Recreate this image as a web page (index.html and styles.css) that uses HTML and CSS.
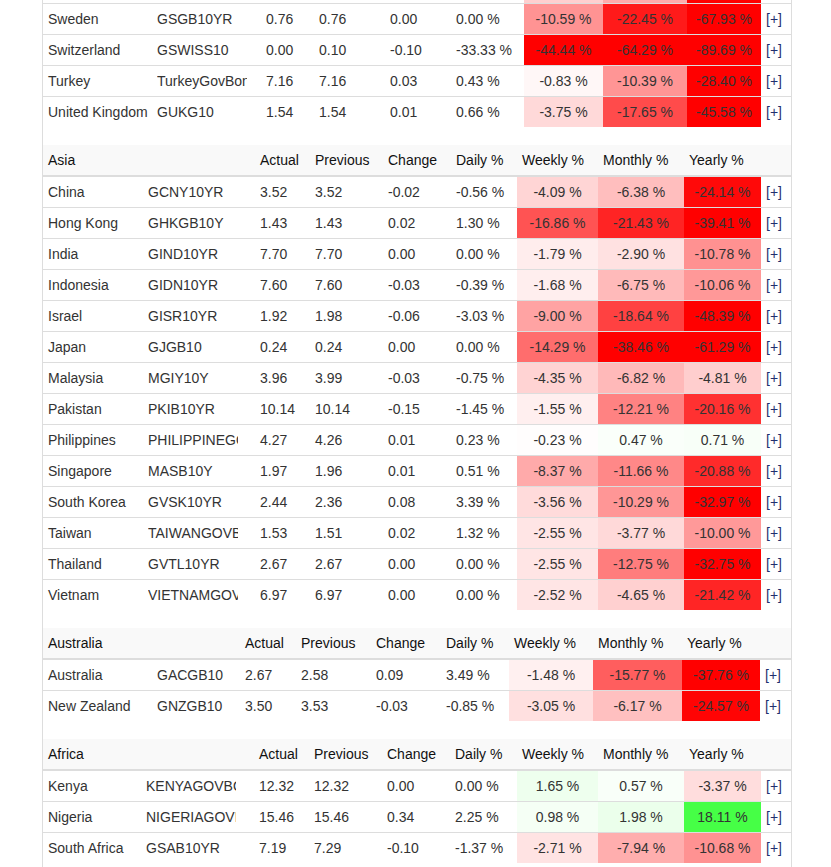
FILE: index.html
```html
<!DOCTYPE html>
<html lang="en">
<head>
<meta charset="utf-8">
<title>Government Bond Yields</title>
<link rel="stylesheet" href="styles.css">
</head>
<body>
<div class="panel">

<table class="t eu">
<colgroup><col class="c1"><col class="c2"><col class="c3"><col class="c4"><col class="c5"><col class="c6"><col class="c7"><col class="c8"><col class="c9"><col class="c10"></colgroup>
<tbody>
<tr><td>Spain</td><td><div class="sym">GSPG10YR</div></td><td>1.77</td><td>1.76</td><td>0.01</td><td>0.57 %</td><td class="h" style="background:rgb(255,207,207)">-4.60 %</td><td class="h" style="background:rgb(255,172,172)">-8.10 %</td><td class="h" style="background:rgb(255,0,0)">-40.21 %</td><td><a href="#">[+]</a></td></tr>
<tr><td>Sweden</td><td><div class="sym">GSGB10YR</div></td><td>0.76</td><td>0.76</td><td>0.00</td><td>0.00 %</td><td class="h" style="background:rgb(255,147,147)">-10.59 %</td><td class="h" style="background:rgb(255,26,26)">-22.45 %</td><td class="h" style="background:rgb(255,0,0)">-67.93 %</td><td><a href="#">[+]</a></td></tr>
<tr><td>Switzerland</td><td><div class="sym">GSWISS10</div></td><td>0.00</td><td>0.10</td><td>-0.10</td><td>-33.33 %</td><td class="h" style="background:rgb(255,0,0)">-44.44 %</td><td class="h" style="background:rgb(255,0,0)">-64.29 %</td><td class="h" style="background:rgb(255,0,0)">-89.69 %</td><td><a href="#">[+]</a></td></tr>
<tr><td>Turkey</td><td><div class="sym">TurkeyGovBond10Y</div></td><td>7.16</td><td>7.16</td><td>0.03</td><td>0.43 %</td><td class="h" style="background:rgb(255,247,247)">-0.83 %</td><td class="h" style="background:rgb(255,149,149)">-10.39 %</td><td class="h" style="background:rgb(255,0,0)">-28.40 %</td><td><a href="#">[+]</a></td></tr>
<tr><td>United Kingdom</td><td><div class="sym">GUKG10</div></td><td>1.54</td><td>1.54</td><td>0.01</td><td>0.66 %</td><td class="h" style="background:rgb(255,217,217)">-3.75 %</td><td class="h" style="background:rgb(255,75,75)">-17.65 %</td><td class="h" style="background:rgb(255,0,0)">-45.58 %</td><td><a href="#">[+]</a></td></tr>
</tbody>
</table>

<table class="t as">
<colgroup><col class="c1"><col class="c2"><col class="c3"><col class="c4"><col class="c5"><col class="c6"><col class="c7"><col class="c8"><col class="c9"><col class="c10"></colgroup>
<thead>
<tr><th>Asia</th><th></th><th>Actual</th><th>Previous</th><th>Change</th><th>Daily %</th><th>Weekly %</th><th>Monthly %</th><th>Yearly %</th><th></th></tr>
</thead>
<tbody>
<tr><td>China</td><td><div class="sym">GCNY10YR</div></td><td>3.52</td><td>3.52</td><td>-0.02</td><td>-0.56 %</td><td class="h" style="background:rgb(255,213,213)">-4.09 %</td><td class="h" style="background:rgb(255,190,190)">-6.38 %</td><td class="h" style="background:rgb(255,9,9)">-24.14 %</td><td><a href="#">[+]</a></td></tr>
<tr><td>Hong Kong</td><td><div class="sym">GHKGB10Y</div></td><td>1.43</td><td>1.43</td><td>0.02</td><td>1.30 %</td><td class="h" style="background:rgb(255,83,83)">-16.86 %</td><td class="h" style="background:rgb(255,36,36)">-21.43 %</td><td class="h" style="background:rgb(255,0,0)">-39.41 %</td><td><a href="#">[+]</a></td></tr>
<tr><td>India</td><td><div class="sym">GIND10YR</div></td><td>7.70</td><td>7.70</td><td>0.00</td><td>0.00 %</td><td class="h" style="background:rgb(255,237,237)">-1.79 %</td><td class="h" style="background:rgb(255,225,225)">-2.90 %</td><td class="h" style="background:rgb(255,145,145)">-10.78 %</td><td><a href="#">[+]</a></td></tr>
<tr><td>Indonesia</td><td><div class="sym">GIDN10YR</div></td><td>7.60</td><td>7.60</td><td>-0.03</td><td>-0.39 %</td><td class="h" style="background:rgb(255,238,238)">-1.68 %</td><td class="h" style="background:rgb(255,186,186)">-6.75 %</td><td class="h" style="background:rgb(255,152,152)">-10.06 %</td><td><a href="#">[+]</a></td></tr>
<tr><td>Israel</td><td><div class="sym">GISR10YR</div></td><td>1.92</td><td>1.98</td><td>-0.06</td><td>-3.03 %</td><td class="h" style="background:rgb(255,163,163)">-9.00 %</td><td class="h" style="background:rgb(255,65,65)">-18.64 %</td><td class="h" style="background:rgb(255,0,0)">-48.39 %</td><td><a href="#">[+]</a></td></tr>
<tr><td>Japan</td><td><div class="sym">GJGB10</div></td><td>0.24</td><td>0.24</td><td>0.00</td><td>0.00 %</td><td class="h" style="background:rgb(255,109,109)">-14.29 %</td><td class="h" style="background:rgb(255,0,0)">-38.46 %</td><td class="h" style="background:rgb(255,0,0)">-61.29 %</td><td><a href="#">[+]</a></td></tr>
<tr><td>Malaysia</td><td><div class="sym">MGIY10Y</div></td><td>3.96</td><td>3.99</td><td>-0.03</td><td>-0.75 %</td><td class="h" style="background:rgb(255,211,211)">-4.35 %</td><td class="h" style="background:rgb(255,185,185)">-6.82 %</td><td class="h" style="background:rgb(255,206,206)">-4.81 %</td><td><a href="#">[+]</a></td></tr>
<tr><td>Pakistan</td><td><div class="sym">PKIB10YR</div></td><td>10.14</td><td>10.14</td><td>-0.15</td><td>-1.45 %</td><td class="h" style="background:rgb(255,239,239)">-1.55 %</td><td class="h" style="background:rgb(255,130,130)">-12.21 %</td><td class="h" style="background:rgb(255,49,49)">-20.16 %</td><td><a href="#">[+]</a></td></tr>
<tr><td>Philippines</td><td><div class="sym">PHILIPPINEGOV10Y</div></td><td>4.27</td><td>4.26</td><td>0.01</td><td>0.23 %</td><td class="h" style="background:rgb(255,253,253)">-0.23 %</td><td class="h" style="background:rgb(250,255,250)">0.47 %</td><td class="h" style="background:rgb(248,255,248)">0.71 %</td><td><a href="#">[+]</a></td></tr>
<tr><td>Singapore</td><td><div class="sym">MASB10Y</div></td><td>1.97</td><td>1.96</td><td>0.01</td><td>0.51 %</td><td class="h" style="background:rgb(255,170,170)">-8.37 %</td><td class="h" style="background:rgb(255,136,136)">-11.66 %</td><td class="h" style="background:rgb(255,42,42)">-20.88 %</td><td><a href="#">[+]</a></td></tr>
<tr><td>South Korea</td><td><div class="sym">GVSK10YR</div></td><td>2.44</td><td>2.36</td><td>0.08</td><td>3.39 %</td><td class="h" style="background:rgb(255,219,219)">-3.56 %</td><td class="h" style="background:rgb(255,150,150)">-10.29 %</td><td class="h" style="background:rgb(255,0,0)">-32.97 %</td><td><a href="#">[+]</a></td></tr>
<tr><td>Taiwan</td><td><div class="sym">TAIWANGOVBOND10Y</div></td><td>1.53</td><td>1.51</td><td>0.02</td><td>1.32 %</td><td class="h" style="background:rgb(255,229,229)">-2.55 %</td><td class="h" style="background:rgb(255,217,217)">-3.77 %</td><td class="h" style="background:rgb(255,153,153)">-10.00 %</td><td><a href="#">[+]</a></td></tr>
<tr><td>Thailand</td><td><div class="sym">GVTL10YR</div></td><td>2.67</td><td>2.67</td><td>0.00</td><td>0.00 %</td><td class="h" style="background:rgb(255,229,229)">-2.55 %</td><td class="h" style="background:rgb(255,125,125)">-12.75 %</td><td class="h" style="background:rgb(255,0,0)">-32.75 %</td><td><a href="#">[+]</a></td></tr>
<tr><td>Vietnam</td><td><div class="sym">VIETNAMGOVBOND10Y</div></td><td>6.97</td><td>6.97</td><td>0.00</td><td>0.00 %</td><td class="h" style="background:rgb(255,229,229)">-2.52 %</td><td class="h" style="background:rgb(255,208,208)">-4.65 %</td><td class="h" style="background:rgb(255,37,37)">-21.42 %</td><td><a href="#">[+]</a></td></tr>
</tbody>
</table>

<table class="t au">
<colgroup><col class="c1"><col class="c2"><col class="c3"><col class="c4"><col class="c5"><col class="c6"><col class="c7"><col class="c8"><col class="c9"><col class="c10"></colgroup>
<thead>
<tr><th>Australia</th><th></th><th>Actual</th><th>Previous</th><th>Change</th><th>Daily %</th><th>Weekly %</th><th>Monthly %</th><th>Yearly %</th><th></th></tr>
</thead>
<tbody>
<tr><td>Australia</td><td><div class="sym">GACGB10</div></td><td>2.67</td><td>2.58</td><td>0.09</td><td>3.49 %</td><td class="h" style="background:rgb(255,240,240)">-1.48 %</td><td class="h" style="background:rgb(255,94,94)">-15.77 %</td><td class="h" style="background:rgb(255,0,0)">-37.76 %</td><td><a href="#">[+]</a></td></tr>
<tr><td>New Zealand</td><td><div class="sym">GNZGB10</div></td><td>3.50</td><td>3.53</td><td>-0.03</td><td>-0.85 %</td><td class="h" style="background:rgb(255,224,224)">-3.05 %</td><td class="h" style="background:rgb(255,192,192)">-6.17 %</td><td class="h" style="background:rgb(255,4,4)">-24.57 %</td><td><a href="#">[+]</a></td></tr>
</tbody>
</table>

<table class="t af">
<colgroup><col class="c1"><col class="c2"><col class="c3"><col class="c4"><col class="c5"><col class="c6"><col class="c7"><col class="c8"><col class="c9"><col class="c10"></colgroup>
<thead>
<tr><th>Africa</th><th></th><th>Actual</th><th>Previous</th><th>Change</th><th>Daily %</th><th>Weekly %</th><th>Monthly %</th><th>Yearly %</th><th></th></tr>
</thead>
<tbody>
<tr><td>Kenya</td><td><div class="sym">KENYAGOVBOND10Y</div></td><td>12.32</td><td>12.32</td><td>0.00</td><td>0.00 %</td><td class="h" style="background:rgb(238,255,238)">1.65 %</td><td class="h" style="background:rgb(249,255,249)">0.57 %</td><td class="h" style="background:rgb(255,221,221)">-3.37 %</td><td><a href="#">[+]</a></td></tr>
<tr><td>Nigeria</td><td><div class="sym">NIGERIAGOVBOND10Y</div></td><td>15.46</td><td>15.46</td><td>0.34</td><td>2.25 %</td><td class="h" style="background:rgb(245,255,245)">0.98 %</td><td class="h" style="background:rgb(235,255,235)">1.98 %</td><td class="h" style="background:rgb(70,255,70)">18.11 %</td><td><a href="#">[+]</a></td></tr>
<tr><td>South Africa</td><td><div class="sym">GSAB10YR</div></td><td>7.19</td><td>7.29</td><td>-0.10</td><td>-1.37 %</td><td class="h" style="background:rgb(255,227,227)">-2.71 %</td><td class="h" style="background:rgb(255,174,174)">-7.94 %</td><td class="h" style="background:rgb(255,146,146)">-10.68 %</td><td><a href="#">[+]</a></td></tr>
</tbody>
</table>

</div>
</body>
</html>
```

FILE: styles.css
```css
html, body {
  margin: 0;
  padding: 0;
  background: #fff;
}

body {
  font-family: "Liberation Sans", Arial, Helvetica, sans-serif;
  font-size: 14px;
  line-height: 20px;
  color: #333;
}

.panel {
  width: 748px;
  margin: -28px 0 0 42px;
  border-left: 1px solid #ddd;
  border-right: 1px solid #ddd;
  min-height: 1000px;
}

.t {
  width: 100%;
  table-layout: fixed;
  border-collapse: collapse;
  border-spacing: 0;
  margin-bottom: 18px;
}

.t th {
  text-align: left;
  font-weight: normal;
  color: #111;
  background: #f9f9f9;
  padding: 5px;
  border-bottom: 2px solid #ddd;
  white-space: nowrap;
}

.t td {
  padding: 5px;
  border-top: 1px solid #ddd;
  white-space: nowrap;
  vertical-align: top;
}

.t td.h {
  text-align: center;
}

.sym {
  max-width: 90px;
  overflow: hidden;
  white-space: nowrap;
}

.t a {
  color: #1f2f6e;
  text-decoration: none;
}

/* Europe */
.eu .c1 { width: 109px; }
.eu .c2 { width: 109px; }
.eu .c3 { width: 53px; }
.eu .c4 { width: 71px; }
.eu .c5 { width: 66px; }
.eu .c6 { width: 73px; }
.eu .c7 { width: 79px; }
.eu .c8 { width: 84px; }
.eu .c9 { width: 74px; }
.eu .c10 { width: 30px; }

/* Asia */
.as .c1 { width: 100px; }
.as .c2 { width: 112px; }
.as .c3 { width: 55px; }
.as .c4 { width: 73px; }
.as .c5 { width: 68px; }
.as .c6 { width: 66px; }
.as .c7 { width: 81px; }
.as .c8 { width: 86px; }
.as .c9 { width: 77px; }
.as .c10 { width: 30px; }

/* Australia */
.au .c1 { width: 109px; }
.au .c2 { width: 88px; }
.au .c3 { width: 56px; }
.au .c4 { width: 75px; }
.au .c5 { width: 70px; }
.au .c6 { width: 68px; }
.au .c7 { width: 84px; }
.au .c8 { width: 89px; }
.au .c9 { width: 78px; }
.au .c10 { width: 31px; }

/* Africa */
.af .c1 { width: 98px; }
.af .c2 { width: 113px; }
.af .c3 { width: 55px; }
.af .c4 { width: 73px; }
.af .c5 { width: 68px; }
.af .c6 { width: 67px; }
.af .c7 { width: 81px; }
.af .c8 { width: 86px; }
.af .c9 { width: 77px; }
.af .c10 { width: 30px; }
```
